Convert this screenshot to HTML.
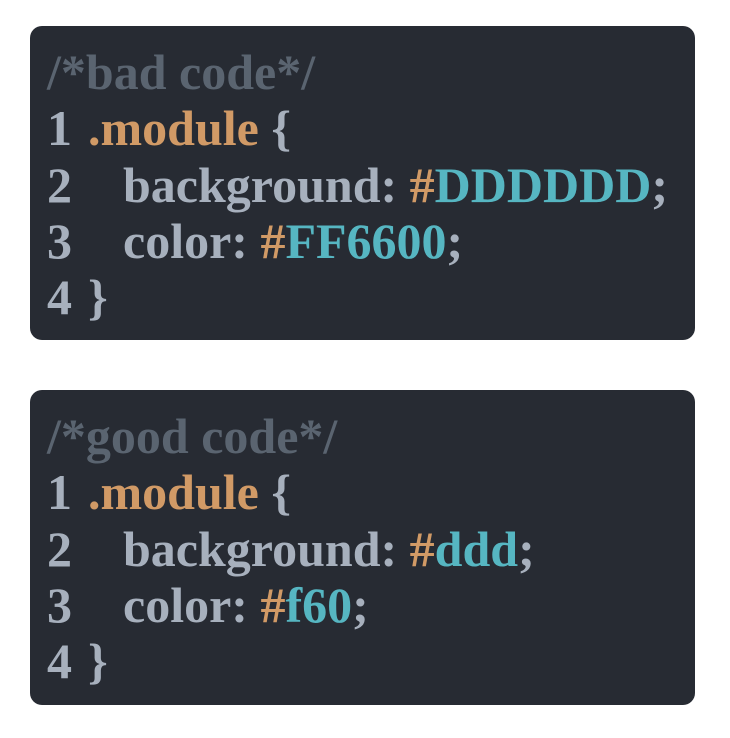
<!DOCTYPE html>
<html><head><style>
body{margin:0;background:#fff;width:730px;height:738px;position:relative}
.b{position:absolute;left:30px;width:665px;background:#272b33;border-radius:12px;font-family:"Liberation Serif",serif;font-weight:bold;font-size:50px;color:#a7b0bd;white-space:pre}
.b div{position:absolute;line-height:56px;height:56px}
.c{color:#5a6470}.o{color:#d19a66}.t{color:#56b6c2}
</style></head><body>
<div class="b" style="top:26px;height:314px">
<div class="c" style="left:17px;top:18px">/*bad code*/</div>
<div style="left:17px;top:74px">1</div><div style="left:58px;top:74px"><span class="o">.module</span> {</div>
<div style="left:17px;top:131px">2</div><div style="left:93px;top:131px">background: <span class="o">#</span><span class="t">DDDDDD</span>;</div>
<div style="left:17px;top:187px">3</div><div style="left:93px;top:187px">color: <span class="o">#</span><span class="t">FF6600</span>;</div>
<div style="left:17px;top:243px">4</div><div style="left:58px;top:243px">}</div>
</div>
<div class="b" style="top:390px;height:315px">
<div class="c" style="left:17px;top:18px">/*good code*/</div>
<div style="left:17px;top:74px">1</div><div style="left:58px;top:74px"><span class="o">.module</span> {</div>
<div style="left:17px;top:131px">2</div><div style="left:93px;top:131px">background: <span class="o">#</span><span class="t">ddd</span>;</div>
<div style="left:17px;top:187px">3</div><div style="left:93px;top:187px">color: <span class="o">#</span><span class="t">f60</span>;</div>
<div style="left:17px;top:243px">4</div><div style="left:58px;top:243px">}</div>
</div>
</body></html>
